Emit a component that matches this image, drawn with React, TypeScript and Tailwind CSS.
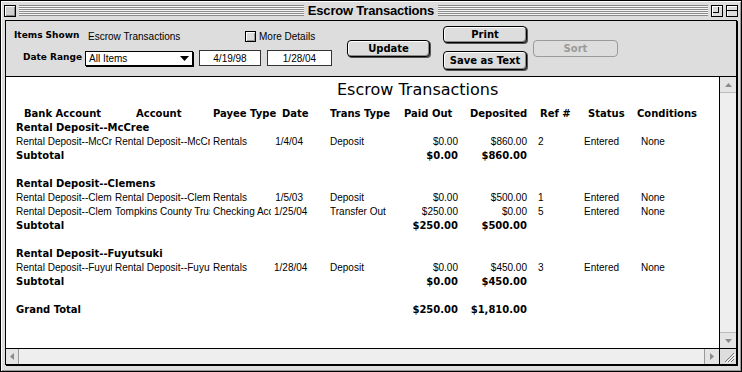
import React from 'react';

const SANS = "font-['Liberation_Sans',Arial,sans-serif]";
const BOLD = "font-['DejaVu_Sans',Verdana,sans-serif] font-bold";

type Row = string[];

interface Group {
    name: string;
    rows: Row[];
    paid: string;
    deposited: string;
}

const groups: Group[] = [
    {
        name: 'Rental Deposit--McCree',
        rows: [['Rental Deposit--McCree', 'Rental Deposit--McCree', 'Rentals', '1/4/04', 'Deposit', '$0.00', '$860.00', '2', 'Entered', 'None']],
        paid: '$0.00',
        deposited: '$860.00',
    },
    {
        name: 'Rental Deposit--Clemens',
        rows: [
            ['Rental Deposit--Clemens', 'Rental Deposit--Clemens', 'Rentals', '1/5/03', 'Deposit', '$0.00', '$500.00', '1', 'Entered', 'None'],
            ['Rental Deposit--Clemens', 'Tompkins County Trust', 'Checking Account', '1/25/04', 'Transfer Out', '$250.00', '$0.00', '5', 'Entered', 'None'],
        ],
        paid: '$250.00',
        deposited: '$500.00',
    },
    {
        name: 'Rental Deposit--Fuyutsuki',
        rows: [['Rental Deposit--Fuyutsuki', 'Rental Deposit--Fuyutsuki', 'Rentals', '1/28/04', 'Deposit', '$0.00', '$450.00', '3', 'Entered', 'None']],
        paid: '$0.00',
        deposited: '$450.00',
    },
];

const COLS = 'grid grid-cols-[99px_98px_61px_56px_70px_58px_69px_57px_57px_80px] h-[14px] leading-[14px] whitespace-nowrap';

function Stripes() {
    return <div className="flex-1 h-[11px] bg-[repeating-linear-gradient(to_bottom,#8a8a8a_0px,#8a8a8a_1px,#f6f6f6_1px,#f6f6f6_2px)]" />;
}

function TitleBar() {
    return (
        <div className="h-[19px] px-[3px] grid grid-cols-[1fr_auto_1fr] items-center">
            <div className="flex items-center">
                <div className="w-[12px] h-[12px] border border-black bg-[#cfcfcf] shadow-[inset_1px_1px_0_#fff,inset_-1px_-1px_0_#888]" />
                <div className="ml-[3px] flex-1 flex">
                    <Stripes />
                </div>
            </div>
            <div className={`px-[4px] text-[13px] font-bold leading-[19px] tracking-[-0.2px] text-black ${SANS}`}>
                Escrow Transactions
            </div>
            <div className="flex items-center">
                <div className="flex-1 flex mr-[3px]">
                    <Stripes />
                </div>
                <div className="relative w-[12px] h-[12px] border border-black bg-[#dcdcdc] shadow-[inset_1px_1px_0_#fff]">
                    <div className="absolute left-[1px] top-[1px] w-[6px] h-[6px] border-r border-b border-black" />
                </div>
                <div className="ml-[3px] w-[12px] h-[12px] border border-black bg-[#dcdcdc] shadow-[inset_1px_1px_0_#fff] flex flex-col justify-center">
                    <div className="h-[1px] bg-black" />
                </div>
            </div>
        </div>
    );
}

function MacButton({ label, className = '', disabled = false }: { label: string; className?: string; disabled?: boolean }) {
    return (
        <div
            className={`flex items-center justify-center rounded-[4px] border text-[10px] ${BOLD} ${
                disabled
                    ? 'border-[#9a9a9a] text-[#9a9a9a] bg-[#dddddd]'
                    : 'border-black text-black bg-[#dddddd] shadow-[inset_1px_1px_0_#fff,inset_-1px_-1px_0_#8a8a8a,1px_1px_0_#555]'
            } ${className}`}
        >
            {label}
        </div>
    );
}

function HeaderPanel() {
    return (
        <div className="h-[56px] border-b border-black bg-[#dddddd] flex shrink-0">
            <div className="w-[341px]">
                <div className="mt-[8px] h-[14px] flex items-center">
                    <span className={`ml-[8px] w-[74px] text-[9px] ${BOLD}`}>Items Shown</span>
                    <span className={`w-[157px] text-[10px] ${SANS}`}>Escrow Transactions</span>
                    <span className="w-[11px] h-[11px] border border-black bg-[#dddddd] shadow-[inset_1px_1px_0_#fff,inset_-1px_-1px_0_#999]" />
                    <span className={`ml-[3px] text-[10px] ${SANS}`}>More Details</span>
                </div>
                <div className="mt-[7px] h-[16px] flex items-center">
                    <span className={`ml-[17px] w-[62px] text-[9px] ${BOLD}`}>Date Range</span>
                    <div className="w-[108px] h-[15px] border border-black bg-white shadow-[1px_1px_0_#000] flex items-center">
                        <span className={`ml-[3px] flex-1 text-[10px] ${SANS}`}>All Items</span>
                        <svg width="9" height="5" viewBox="0 0 9 5" className="mr-[3px]">
                            <polygon points="0,0 9,0 4.5,5" fill="#000" />
                        </svg>
                    </div>
                    <div className={`ml-[6px] w-[62px] h-[16px] border border-[#333] bg-white flex items-center justify-center text-[10px] ${SANS}`}>
                        4/19/98
                    </div>
                    <div className={`ml-[6px] w-[65px] h-[16px] border border-[#333] bg-white flex items-center justify-center text-[10px] ${SANS}`}>
                        1/28/04
                    </div>
                </div>
            </div>
            <MacButton label="Update" className="mt-[19px] w-[83px] h-[17px]" />
            <div className="ml-[13px] mt-[5px] w-[84px] flex flex-col">
                <MacButton label="Print" className="h-[17px]" />
                <MacButton label="Save as Text" className="mt-[8px] h-[19px]" />
            </div>
            <MacButton label="Sort" disabled className="ml-[6px] mt-[19px] w-[85px] h-[17px]" />
        </div>
    );
}

function Cell({ children }: { children?: React.ReactNode }) {
    return <div className="overflow-hidden mr-[3px]">{children}</div>;
}

function DataRow({ r }: { r: Row }) {
    return (
        <div className={`${COLS} text-[10px] ${SANS}`}>
            <Cell>{r[0]}</Cell>
            <Cell>{r[1]}</Cell>
            <Cell>{r[2]}</Cell>
            <div className="text-right pr-[27px]">{r[3]}</div>
            <Cell>{r[4]}</Cell>
            <div className="text-right">{r[5]}</div>
            <div className="text-right">{r[6]}</div>
            <div className="pl-[11px]">{r[7]}</div>
            <div>{r[8]}</div>
            <div>{r[9]}</div>
        </div>
    );
}

function TotalRow({ label, paid, deposited }: { label: string; paid: string; deposited: string }) {
    return (
        <div className={`${COLS} text-[10px] ${BOLD}`}>
            <div className="col-span-5">{label}</div>
            <div className="text-right">{paid}</div>
            <div className="text-right">{deposited}</div>
        </div>
    );
}

function Report() {
    return (
        <div className="flex-1 bg-white overflow-hidden text-black">
            <div className="mt-[4px] h-[18px] leading-[18px] pl-[331px] text-[16px] font-['DejaVu_Sans',Verdana,sans-serif] whitespace-nowrap">
                Escrow Transactions
            </div>
            <div className="mt-[8px] pl-[10px]">
                <div className={`${COLS} text-[10px] ${BOLD}`}>
                    <div className="pl-[8px]">Bank Account</div>
                    <div className="pl-[21px]">Account</div>
                    <div>Payee Type</div>
                    <div className="pl-[8px]">Date</div>
                    <div>Trans Type</div>
                    <div className="pl-[4px]">Paid Out</div>
                    <div className="pl-[12px]">Deposited</div>
                    <div className="pl-[13px]">Ref #</div>
                    <div className="pl-[4px]">Status</div>
                    <div className="-ml-[4px]">Conditions</div>
                </div>
                {groups.map((g) => (
                    <div key={g.name}>
                        <div className={`h-[14px] leading-[14px] text-[10px] whitespace-nowrap ${BOLD}`}>{g.name}</div>
                        {g.rows.map((r, i) => (
                            <DataRow key={i} r={r} />
                        ))}
                        <TotalRow label="Subtotal" paid={g.paid} deposited={g.deposited} />
                        <div className="h-[14px]" />
                    </div>
                ))}
                <TotalRow label="Grand Total" paid="$250.00" deposited="$1,810.00" />
            </div>
        </div>
    );
}

function VScroll() {
    return (
        <div className="w-[17px] border-l border-black bg-[#eeeeee] flex flex-col justify-between">
            <div className="h-[16px] border-b border-[#bbbbbb] bg-[#e4e4e4] flex items-center justify-center">
                <svg width="7" height="4" viewBox="0 0 7 4">
                    <polygon points="3.5,0 7,4 0,4" fill="#8a8a8a" />
                </svg>
            </div>
            <div className="h-[16px] border-t border-[#bbbbbb] bg-[#e4e4e4] flex items-center justify-center">
                <svg width="7" height="4" viewBox="0 0 7 4">
                    <polygon points="0,0 7,0 3.5,4" fill="#8a8a8a" />
                </svg>
            </div>
        </div>
    );
}

function HScroll() {
    return (
        <div className="h-[16px] border-t border-black flex shrink-0">
            <div className="w-[13px] border-r border-[#999999] bg-[#e4e4e4] flex items-center justify-center">
                <svg width="4" height="7" viewBox="0 0 4 7">
                    <polygon points="4,0 4,7 0,3.5" fill="#8a8a8a" />
                </svg>
            </div>
            <div className="flex-1 bg-[#eeeeee]" />
            <div className="w-[15px] border-l border-[#999999] bg-[#e4e4e4] flex items-center justify-center">
                <svg width="4" height="7" viewBox="0 0 4 7">
                    <polygon points="0,0 4,3.5 0,7" fill="#8a8a8a" />
                </svg>
            </div>
            <div className="w-[17px] border-l border-black bg-[#dddddd] flex items-center justify-center">
                <svg width="13" height="13" viewBox="0 0 13 13">
                    <line x1="3" y1="12" x2="12" y2="3" stroke="#777" />
                    <line x1="4" y1="13" x2="13" y2="4" stroke="#fff" />
                    <line x1="6" y1="12" x2="12" y2="6" stroke="#777" />
                    <line x1="7" y1="13" x2="13" y2="7" stroke="#fff" />
                    <line x1="9" y1="12" x2="12" y2="9" stroke="#777" />
                </svg>
            </div>
        </div>
    );
}

export default function App() {
    return (
        <div className="w-[742px] h-[372px] border border-black bg-[#dddddd] flex flex-col shadow-[inset_1px_1px_0_#fff,inset_-1px_-1px_0_#999] text-black">
            <TitleBar />
            <div className="flex-1 mx-[4px] mb-[6px] border border-black shadow-[1px_1px_0_#000] flex flex-col overflow-hidden">
                <HeaderPanel />
                <div className="flex-1 flex min-h-0">
                    <Report />
                    <VScroll />
                </div>
                <HScroll />
            </div>
        </div>
    );
}
